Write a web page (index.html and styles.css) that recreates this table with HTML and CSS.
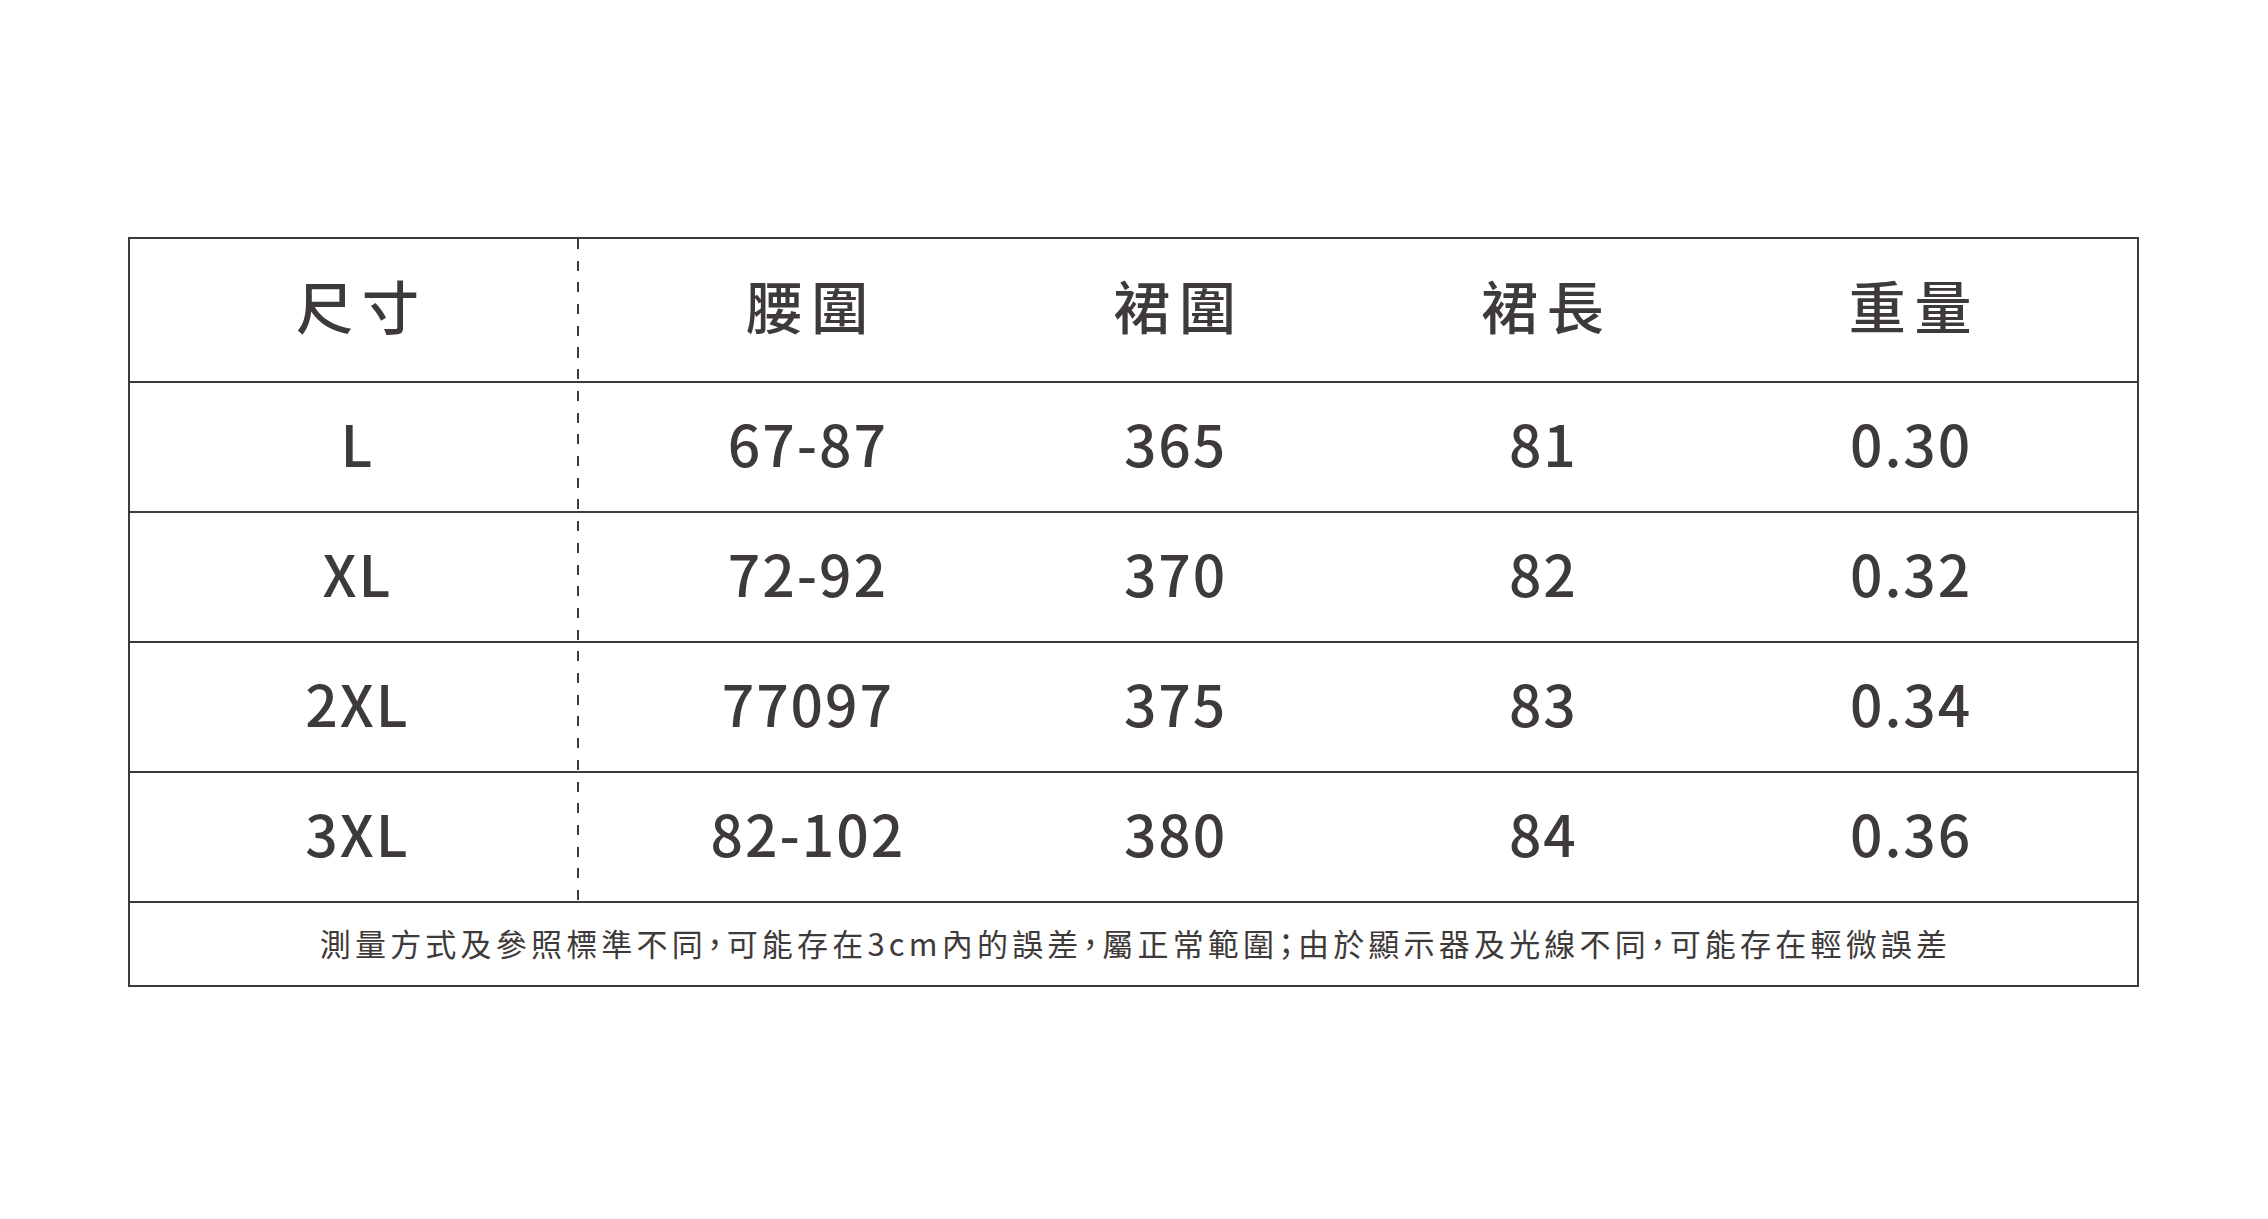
FILE: index.html
```html
<!DOCTYPE html>
<html lang="zh-Hant">
<head>
<meta charset="utf-8">
<title>尺寸表</title>
<link rel="stylesheet" href="styles.css">
</head>
<body>
<div class="chart">
  <div class="grid">
    <div class="row head">
      <div class="size">尺寸</div>
      <div class="vals">
        <div class="cell">腰圍</div>
        <div class="cell">裙圍</div>
        <div class="cell">裙長</div>
        <div class="cell">重量</div>
      </div>
    </div>
    <div class="row">
      <div class="size">L</div>
      <div class="vals">
        <div class="cell">67-87</div>
        <div class="cell">365</div>
        <div class="cell">81</div>
        <div class="cell">0.30</div>
      </div>
    </div>
    <div class="row">
      <div class="size">XL</div>
      <div class="vals">
        <div class="cell">72-92</div>
        <div class="cell">370</div>
        <div class="cell">82</div>
        <div class="cell">0.32</div>
      </div>
    </div>
    <div class="row">
      <div class="size">2XL</div>
      <div class="vals">
        <div class="cell">77097</div>
        <div class="cell">375</div>
        <div class="cell">83</div>
        <div class="cell">0.34</div>
      </div>
    </div>
    <div class="row">
      <div class="size">3XL</div>
      <div class="vals">
        <div class="cell">82-102</div>
        <div class="cell">380</div>
        <div class="cell">84</div>
        <div class="cell">0.36</div>
      </div>
    </div>
  </div>
  <div class="note">測量方式及參照標準不同，可能存在3cm內的誤差，屬正常範圍；由於顯示器及光線不同，可能存在輕微誤差</div>
</div>
</body>
</html>
```
FILE: styles.css
```css
html, body {
  margin: 0;
  padding: 0;
  background: #ffffff;
}

body {
  font-family: "Noto Sans CJK TC", "Noto Sans CJK SC", "Noto Sans", sans-serif;
  color: #3e3a39;
}

.chart {
  box-sizing: border-box;
  width: 2011px;
  margin: 237px 0 0 128px;
  border: 2px solid #3e3a39;
}

.grid {
  background-image: repeating-linear-gradient(to bottom, #3e3a39 0, #3e3a39 10px, transparent 10px, transparent 21.7px);
  background-repeat: no-repeat;
  background-size: 2px 100%;
  background-position: 447px 0;
}

.row {
  display: flex;
  height: 128px;
  border-bottom: 2px solid #3e3a39;
  font-size: 57px;
  line-height: 1;
  letter-spacing: 2px;
  font-weight: 500;
}

.row.head {
  height: 142px;
  letter-spacing: 9px;
}

.size {
  width: 446px;
  flex: none;
  display: flex;
  align-items: center;
  justify-content: center;
  padding: 0 0 10px 9px;
  box-sizing: border-box;
}

.vals {
  flex: 1;
  display: flex;
  padding: 0 43px 0 47px;
}

.cell {
  flex: 1;
  display: flex;
  align-items: center;
  justify-content: center;
  padding: 0 0 10px 2px;
}

.head .size {
  padding: 0 0 11px 18px;
}

.head .cell {
  padding: 0 0 11px 9px;
}

.note {
  height: 82px;
  box-sizing: border-box;
  display: flex;
  align-items: center;
  justify-content: center;
  font-size: 31px;
  letter-spacing: 4.2px;
  line-height: 1;
  padding: 0 0 3px 4px;
  font-feature-settings: "halt";
}
```
